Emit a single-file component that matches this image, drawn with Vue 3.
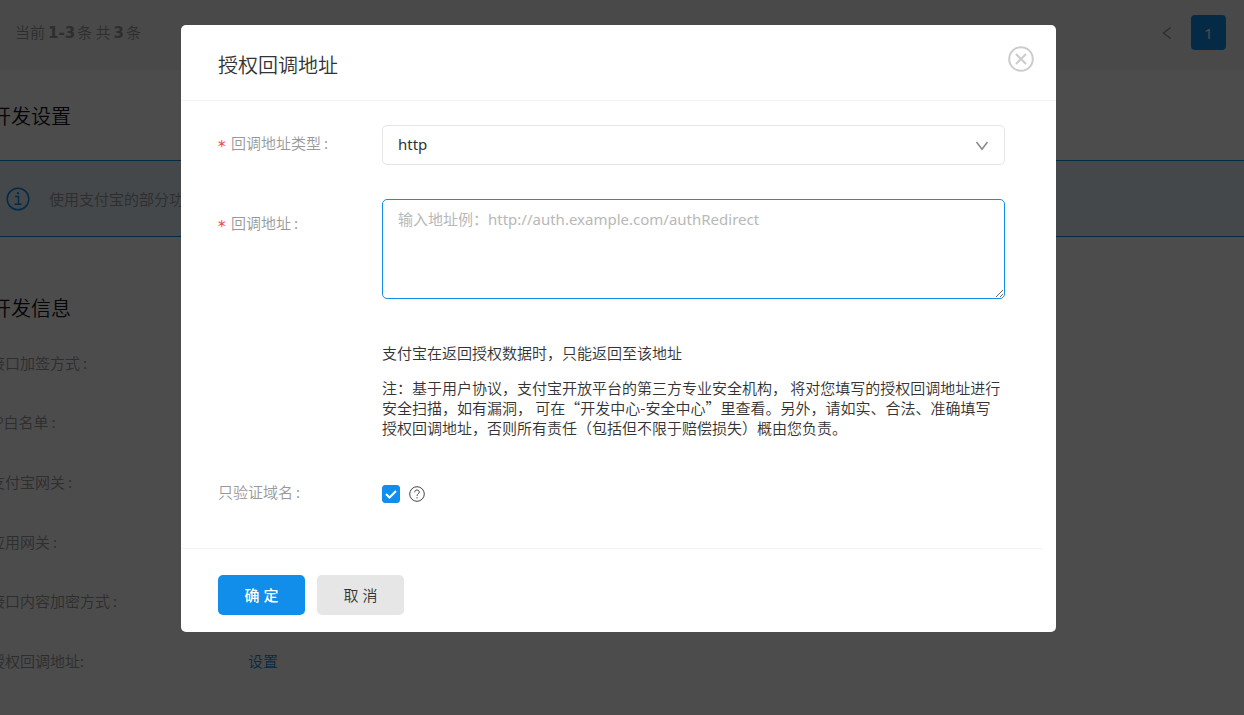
<script setup>
import { ref } from 'vue'

const settings = [
  { label: '接口加签方式', loose: true },
  { label: 'IP白名单', loose: true },
  { label: '支付宝网关', loose: true },
  { label: '应用网关', loose: true },
  { label: '接口内容加密方式', loose: true },
  { label: '授权回调地址', action: '设置' }
]
const type = ref('http')
const address = ref('')
const domainOnly = ref(true)
</script>

<template>
  <div class="app">
    <main class="page">
      <div class="pager">
        <span class="summary">当前<b>1-3</b>条 共<b>3</b>条</span>
        <nav class="pages">
          <button class="prev" type="button" aria-label="上一页">
            <svg width="10" height="14" viewBox="0 0 10 14"><path d="M8.500 1.500 1.500 7l7 5.500" /></svg>
          </button>
          <button class="current" type="button">1</button>
        </nav>
      </div>

      <h2 class="section">开发设置</h2>
      <div class="notice">
        <svg class="info" width="24" height="24" viewBox="0 0 24 24">
          <circle cx="12" cy="12" r="10.8" />
          <path d="M9 9.500h3.500V17M8.500 17.200h7" />
          <path class="dot" d="M11 5.200h2v2h-2z" />
        </svg>
        <span>使用支付宝的部分功能，需要先完成开发设置</span>
      </div>

      <h2 class="section second">开发信息</h2>
      <dl class="settings">
        <div v-for="row in settings" :key="row.label" class="setting">
          <dt :class="{ loose: row.loose }">{{ row.label }}<span>:</span></dt>
          <dd><a v-if="row.action" href="#">{{ row.action }}</a></dd>
        </div>
      </dl>
    </main>

    <div class="mask">
      <form class="dialog" role="dialog" aria-labelledby="dialog-title" @submit.prevent>
        <header class="head">
          <h1 id="dialog-title">授权回调地址</h1>
          <button class="close" type="button" aria-label="关闭">
            <svg width="26" height="26" viewBox="0 0 26 26">
              <circle cx="13" cy="13" r="11.8" />
              <path d="m8 8 10 10M18 8 8 18" />
            </svg>
          </button>
        </header>

        <div class="body">
          <div class="field type">
            <label for="type"><span class="star">*</span>回调地址类型<span class="colon">:</span></label>
            <div class="select">
              <select id="type" v-model="type">
                <option>http</option>
                <option>https</option>
              </select>
              <svg width="14" height="10" viewBox="0 0 14 10"><path d="M1.500 1 7 8.200 12.500 1" /></svg>
            </div>
          </div>

          <div class="field address">
            <label for="address"><span class="star">*</span>回调地址<span class="colon">:</span></label>
            <div class="control">
              <textarea id="address" v-model="address" placeholder="输入地址例：http://auth.example.com/authRedirect"></textarea>
              <div class="help">
                <p>支付宝在返回授权数据时，只能返回至该地址</p>
                <p>注：基于用户协议，支付宝开放平台的第三方专业安全机构， 将对您填写的授权回调地址进行安全扫描，如有漏洞， 可在“开发中心-安全中心”里查看。另外，请如实、合法、准确填写授权回调地址，否则所有责任（包括但不限于赔偿损失）概由您负责。</p>
              </div>
            </div>
          </div>

          <div class="field domain">
            <label for="domain">只验证域名<span class="colon">:</span></label>
            <div class="check">
              <span class="box">
                <input id="domain" v-model="domainOnly" type="checkbox">
                <svg v-if="domainOnly" width="18" height="18" viewBox="0 0 18 18"><path d="m4 9 3.500 3.500L14 6" /></svg>
              </span>
              <svg class="question" width="16" height="16" viewBox="0 0 16 16">
                <circle cx="8" cy="8" r="7.3" />
                <path d="M5.700 6.300C5.700 4.800 6.700 4 8 4s2.300.8 2.300 2.100C10.300 7.700 8 7.800 8 9.900M8 11.200v1.200" />
              </svg>
            </div>
          </div>
        </div>

        <footer class="foot">
          <button class="btn primary" type="submit">确 定</button>
          <button class="btn" type="button">取 消</button>
        </footer>
      </form>
    </div>
  </div>
</template>

<style>
body {
  margin: 0;
  background: #fff;
}
</style>

<style scoped>
.app {
  font: 350 15px/20px "Noto Sans", "Noto Sans CJK SC", sans-serif;
  color: #333;
  min-height: 100vh;
  overflow: hidden;
}
.app * {
  box-sizing: border-box;
}
h1, h2, p, dl, dd {
  margin: 0;
  font-weight: 350;
}
button, select, textarea {
  font: inherit;
  color: inherit;
}
button {
  border: 0;
  padding: 0;
  background: none;
  cursor: pointer;
}
svg {
  fill: none;
  stroke: currentColor;
  display: block;
}
a {
  color: #108ee9;
  text-decoration: none;
}

.pager {
  display: flex;
  justify-content: space-between;
  align-items: center;
  height: 70px;
  padding: 0 18px 5px 15px;
  background: #f5f5f5;
  color: #999;
}
.summary {
  font-family: "Noto Sans CJK SC", sans-serif;
}
.summary b {
  margin: 0 2px 0 3px;
  font-family: "DejaVu Sans", sans-serif;
}
.pages {
  display: flex;
  align-items: center;
  gap: 19px;
}
.pages svg {
  stroke-width: 1.5;
}
.current {
  width: 35px;
  height: 35px;
  border-radius: 4px;
  background: #108ee9;
  color: #fff;
  font-weight: 400;
}
.section {
  font-size: 20px;
  line-height: 30px;
  margin: 32px 0 28px -9px;
  color: #111;
}
.section.second {
  margin: 57px 0 9px -9px;
}
.notice {
  display: flex;
  align-items: center;
  gap: 19px;
  height: 77px;
  padding-left: 6px;
  border: solid #108ee9;
  border-width: 1px 0;
  background: #e4f1f9;
  color: #999;
}
.info {
  color: #108ee9;
  stroke-width: 1.5;
}
.dot {
  fill: currentColor;
  stroke: none;
}
.settings {
  display: grid;
  grid-auto-rows: 1fr;
  height: 358px;
  margin-left: -10px;
}
.setting {
  display: grid;
  grid-template-columns: 258px 1fr;
  align-items: center;
  color: #999;
}
.setting span {
  font-weight: 400;
}
.loose span {
  margin-left: 3px;
}

.mask {
  position: fixed;
  inset: 0;
  padding: 25px 188px 0 181px;
  background: rgba(0, 0, 0, 0.7);
}
.dialog {
  border-radius: 5px;
  background: #fff;
}
.head {
  display: flex;
  justify-content: space-between;
  align-items: flex-start;
  padding: 21px 22px 17px 37px;
  border-bottom: 1px solid #f2f2f2;
}
.head h1 {
  padding-top: 3px;
  font-size: 20px;
  line-height: 34px;
}
.close {
  color: #ccc;
}
.close svg {
  stroke-width: 2;
}
.body {
  padding: 24px 51px 0 37px;
}
.field {
  display: grid;
  grid-template-columns: 164px 1fr;
  align-items: start;
}
.field label {
  display: flex;
  align-items: center;
  line-height: 36px;
  color: #999;
}
.star {
  width: 13px;
  height: 36px;
  color: #f04134;
  font-family: "DejaVu Sans", sans-serif;
  font-weight: 400;
  line-height: 44px;
}
.colon {
  margin-left: 3px;
  font-weight: 400;
}
.address {
  margin-top: 34px;
}
.address label {
  padding-top: 6px;
}
.select {
  position: relative;
}
.select select {
  display: block;
  width: 100%;
  height: 40px;
  padding: 0 40px 2px 15px;
  border: 1px solid #e5e5e5;
  border-radius: 5px;
  background: #fff;
  font-weight: 400;
  appearance: none;
}
.select svg {
  position: absolute;
  right: 16px;
  top: 16px;
  color: #888;
  stroke-width: 1.5;
  pointer-events: none;
}
textarea {
  display: block;
  width: 100%;
  height: 100px;
  padding: 9px 15px;
  border: 1px solid #108ee9;
  border-radius: 5px;
  outline: 0;
  background: #fff;
  font-weight: 400;
  resize: vertical;
}
textarea::placeholder {
  color: #b8b8b8;
}
.help {
  display: grid;
  gap: 15px;
  margin-top: 44px;
  font-family: "Noto Sans CJK SC", sans-serif;
}
.domain {
  margin-top: 37px;
}
.domain label {
  line-height: 34px;
}
.check {
  display: flex;
  align-items: center;
  gap: 9px;
  height: 38px;
}
.box {
  position: relative;
}
.box input {
  display: block;
  width: 18px;
  height: 18px;
  margin: 0;
  border: 1px solid #d9d9d9;
  border-radius: 3px;
  appearance: none;
}
.box input:checked {
  border-color: #108ee9;
  background: #108ee9;
}
.box svg {
  position: absolute;
  inset: 0;
  color: #fff;
  stroke-width: 2;
  pointer-events: none;
}
.question {
  color: #444;
}
.foot {
  display: flex;
  gap: 12px;
  margin: 35px 13px 0 0;
  padding: 26px 37px 17px;
  border-top: 1px solid #f2f2f2;
}
.btn {
  width: 87px;
  height: 40px;
  border-radius: 5px;
  background: #e6e6e6;
}
.primary {
  background: #108ee9;
  color: #fff;
  font-weight: 500;
}
</style>
